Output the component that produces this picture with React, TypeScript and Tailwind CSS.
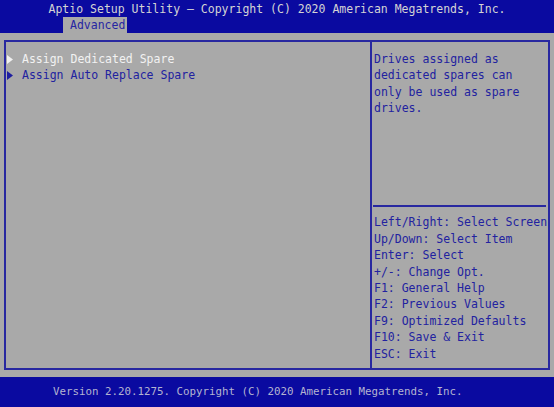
const mono = "font-['DejaVu_Sans_Mono','Liberation_Mono',monospace]";

const helpLines = [
  "Drives assigned as",
  "dedicated spares can",
  "only be used as spare",
  "drives.",
];

const keyLines = [
  "Left/Right: Select Screen",
  "Up/Down: Select Item",
  "Enter: Select",
  "+/-: Change Opt.",
  "F1: General Help",
  "F2: Previous Values",
  "F9: Optimized Defaults",
  "F10: Save & Exit",
  "ESC: Exit",
];

const menuItems = [
  { label: "Assign Dedicated Spare", active: true },
  { label: "Assign Auto Replace Spare", active: false },
];

function Arrow({ color }: { color: string }) {
  return (
    <svg width="7" height="9" viewBox="0 0 7 9" className="shrink-0">
      <path d="M0 0 L6 4.5 L0 9 Z" fill={color} />
    </svg>
  );
}

export default function App() {
  return (
    <div
      className={`w-[554px] h-[407px] flex flex-col bg-[#a9a9a9] text-[11.5px] leading-[16.4px] ${mono}`}
    >
      {/* Title bar with tab */}
      <div className="h-[33px] bg-[#0a0aa0] flex flex-col">
        <div className="h-[17px] flex items-center justify-center pt-[1px] text-[#d4d4d4]">
          Aptio Setup Utility – Copyright (C) 2020 American Megatrends, Inc.
        </div>
        <div className="flex h-[16px] pl-[63px]">
          <div className="bg-[#a9a9a9] pl-[7px] pr-[2px] flex items-center text-[#2626a2]">
            Advanced
          </div>
        </div>
      </div>

      {/* Main panel */}
      <div className="flex-1 px-[4px] pt-[7px] pb-[7px]">
        <div className="h-full border-2 border-[#2828a0] flex">
          <div className="w-[366px] border-r-2 border-[#2828a0] pt-[9px] pl-[1px]">
            {menuItems.map((item) => (
              <div key={item.label} className="flex items-center h-[16.4px]">
                <Arrow color={item.active ? "#f0f0f0" : "#1e1ea0"} />
                <span
                  className={`ml-[8px] ${item.active ? "text-[#f2f2f2]" : "text-[#2222a0]"}`}
                >
                  {item.label}
                </span>
              </div>
            ))}
          </div>
          <div className="flex-1 flex flex-col text-[#2222a0]">
            <div className="pt-[9px] pl-[2px]">
              {helpLines.map((l) => (
                <div key={l} className="whitespace-pre">
                  {l}
                </div>
              ))}
            </div>
            <div className="flex-1" />
            <div className="h-[2px] bg-[#2828a0] ml-[1px] mr-[2px]" />
            <div className="pt-[7px] pb-[6px] pl-[2px]">
              {keyLines.map((l) => (
                <div key={l} className="whitespace-pre">
                  {l}
                </div>
              ))}
            </div>
          </div>
        </div>
      </div>

      {/* Footer */}
      <div className="h-[30px] bg-[#0a0aa0] flex items-center pl-[53px] text-[10.8px] text-[#b4b4d0]">
        Version 2.20.1275. Copyright (C) 2020 American Megatrends, Inc.
      </div>
    </div>
  );
}
